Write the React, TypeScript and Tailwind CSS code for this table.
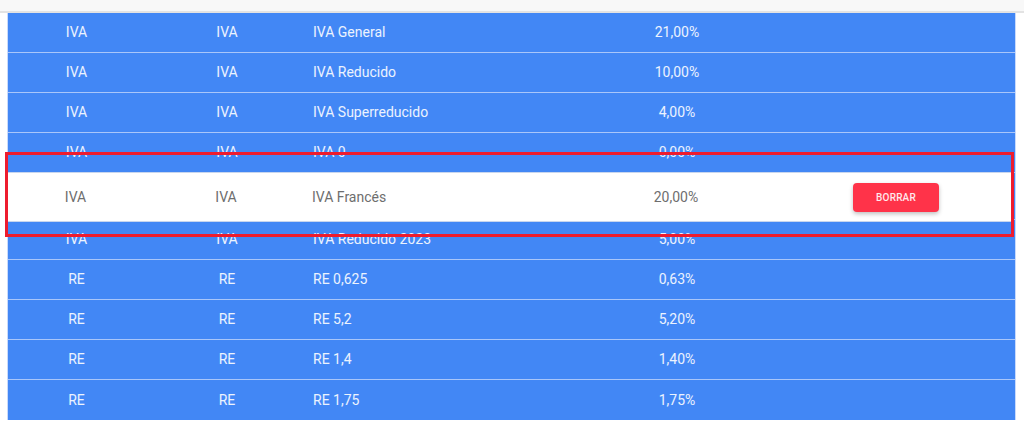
import React from "react";

type Tax = { type: string; group: string; name: string; rate: string };

const before: Tax[] = [
  { type: "IVA", group: "IVA", name: "IVA General", rate: "21,00%" },
  { type: "IVA", group: "IVA", name: "IVA Reducido", rate: "10,00%" },
  { type: "IVA", group: "IVA", name: "IVA Superreducido", rate: "4,00%" },
  { type: "IVA", group: "IVA", name: "IVA 0", rate: "0,00%" },
];

const after: Tax[] = [
  { type: "IVA", group: "IVA", name: "IVA Reducido 2023", rate: "5,00%" },
  { type: "RE", group: "RE", name: "RE 0,625", rate: "0,63%" },
  { type: "RE", group: "RE", name: "RE 5,2", rate: "5,20%" },
  { type: "RE", group: "RE", name: "RE 1,4", rate: "1,40%" },
  { type: "RE", group: "RE", name: "RE 1,75", rate: "1,75%" },
];

const dragged: Tax = { type: "IVA", group: "IVA", name: "IVA Francés", rate: "20,00%" };

function Cells({ tax }: { tax: Tax }) {
  return (
    <>
      <div className="w-[137px] shrink-0 text-center">{tax.type}</div>
      <div className="w-[164px] shrink-0 text-center">{tax.group}</div>
      <div className="w-[272px] shrink-0 pl-[4px]">{tax.name}</div>
      <div className="w-[192px] shrink-0 text-center">{tax.rate}</div>
    </>
  );
}

function Row({ tax }: { tax: Tax }) {
  return (
    <div className="flex h-10 items-center border-b border-[#a9c6fa] text-white/90">
      <Cells tax={tax} />
    </div>
  );
}

export default function App() {
  return (
    <div
      className="relative h-[427px] w-[1024px] overflow-hidden bg-white text-[14px]"
      style={{ fontFamily: "Roboto, 'Liberation Sans', sans-serif" }}
    >
      <div className="h-[11px] bg-[#f8f8f8]" />
      <div className="h-[2px] bg-[#e3e3e3]" />

      <div className="ml-[7px] w-[1009px] border-x border-[#c9dafb] bg-[#4287f5]">
        {before.map((t) => (
          <Row key={t.name} tax={t} />
        ))}
        <div className="h-[47px] border-b border-[#a9c6fa]" />
        {after.map((t, i) => (
          <div
            key={t.name}
            className={
              i === after.length - 1
                ? "flex h-10 items-center text-white/90"
                : "flex h-10 items-center border-b border-[#a9c6fa] text-white/90"
            }
          >
            <Cells tax={t} />
          </div>
        ))}
      </div>

      {/* row being dragged */}
      <div className="absolute left-[7px] top-[172px] flex h-[50px] w-[1005px] items-center border-y border-[#c8d6ee] bg-white text-[#6e6e6e]">
        <Cells tax={dragged} />
        <div className="flex w-[240px] justify-center">
          <button className="ml-[8px] h-[29px] w-[86px] rounded-[4px] bg-[#ff3349] text-[10px] font-medium tracking-[0.2px] text-white/90 shadow-[0_2px_4px_rgba(0,0,0,0.25)]">
            BORRAR
          </button>
        </div>
      </div>

      <div className="pointer-events-none absolute left-[5px] top-[152px] h-[85px] w-[1009px] border-[3px] border-[#ee1c2e]" />
    </div>
  );
}
